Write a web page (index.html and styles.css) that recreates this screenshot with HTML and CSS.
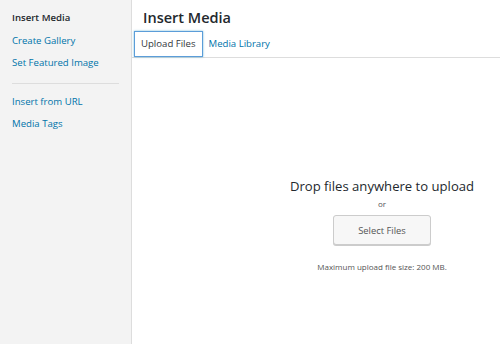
FILE: index.html
```html
<!DOCTYPE html>
<html lang="en">

<head>
    <meta charset="UTF-8">
    <meta name="viewport" content="width=device-width, initial-scale=1.0">
    <title>Insert Media</title>
    <link rel="stylesheet" href="styles.css">
</head>

<body>
    <div class="modal">
        <div class="menu">
            <a class="menu-item active">Insert Media</a>
            <a class="menu-item">Create Gallery</a>
            <a class="menu-item">Set Featured Image</a>
            <div class="separator"></div>
            <a class="menu-item">Insert from URL</a>
            <a class="menu-item">Media Tags</a>
        </div>
        <div class="frame">
            <h1 class="frame-title">Insert Media</h1>
            <div class="router">
                <a class="tab active">Upload Files</a>
                <a class="tab">Media Library</a>
            </div>
            <div class="uploader">
                <div class="upload-inner">
                    <p class="drop-text">Drop files anywhere to upload</p>
                    <p class="or">or</p>
                    <button class="btn">Select Files</button>
                    <p class="max-size">Maximum upload file size: 200 MB.</p>
                </div>
            </div>
        </div>
    </div>
</body>

</html>
```

FILE: styles.css
```css
html,
body {
    margin: 0;
    padding: 0;
    height: 100%;
    overflow: hidden;
}

body {
    font-family: "Open Sans", Arial, sans-serif;
    background: #fff;
    color: #444;
}

.modal {
    display: flex;
    width: 632px;
    height: 344px;
}

.menu {
    width: 131px;
    flex-shrink: 0;
    background: #f3f3f3;
    border-right: 1px solid #ddd;
    padding-top: 7px;
    box-sizing: content-box;
}

.menu-item {
    display: block;
    padding: 3px 12px;
    font-size: 9.6px;
    line-height: 16.5px;
    color: #0073aa;
    text-decoration: none;
}

.menu-item.active {
    color: #23282d;
    font-weight: 600;
}

.separator {
    height: 1px;
    margin: 8px 12px 7px 12px;
    background: #ddd;
}

.frame {
    flex: 1;
    display: flex;
    flex-direction: column;
}

.frame-title {
    margin: 0;
    padding: 7px 0 0 11px;
    font-size: 14.5px;
    line-height: 22px;
    font-weight: 600;
    color: #23282d;
}

.router {
    display: flex;
    align-items: center;
    padding: 2px 0 0 2px;
    height: 26px;
    border-bottom: 1px solid #ddd;
}

.tab {
    display: block;
    padding: 0 5px;
    font-size: 9.6px;
    line-height: 24px;
    color: #0073aa;
    border: 1px solid transparent;
}

.tab.active {
    padding: 0 6px;
    color: #32373c;
    border-color: #5b9dd9;
    box-shadow: 0 0 2px rgba(30, 140, 190, 0.6);
}

.uploader {
    flex: 1;
    display: flex;
    justify-content: center;
    padding-top: 118px;
}

.upload-inner {
    display: flex;
    flex-direction: column;
    align-items: center;
}

.drop-text {
    margin: 0;
    font-size: 13.1px;
    line-height: 20px;
    color: #23282d;
}

.or {
    margin: 2px 0 0;
    font-size: 8px;
    line-height: 11px;
    color: #555;
}

.btn {
    margin-top: 6px;
    width: 98px;
    height: 30px;
    background: #f7f7f7;
    border: 1px solid #ccc;
    border-radius: 3px;
    box-shadow: 0 1px 0 #ccc;
    font-family: "Open Sans", Arial, sans-serif;
    font-size: 9.4px;
    color: #555;
}

.max-size {
    margin: 16px 0 0;
    font-size: 8px;
    line-height: 11px;
    color: #555;
}
```
